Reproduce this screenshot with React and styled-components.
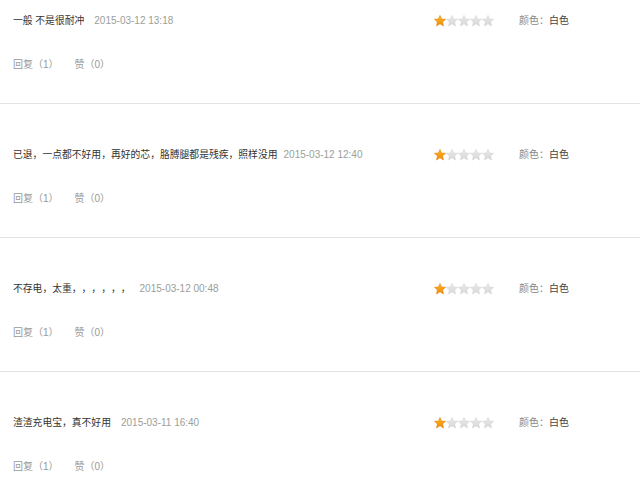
import React from "react";
import styled, { createGlobalStyle } from "styled-components";

const Global = createGlobalStyle`
  html, body { margin: 0; padding: 0; background: #fff; overflow: hidden; }
  body {
    font-family: "Liberation Sans", "Noto Sans CJK SC", sans-serif;
    text-spacing-trim: space-all;
  }
`;

const List = styled.ul`
  list-style: none;
  margin: -30px 0 0 0;
  padding: 0;
  width: 640px;
`;

const Item = styled.li`
  box-sizing: border-box;
  height: 134px;
  padding: 41px 0 0 13px;
  border-bottom: 1px solid #e3e3e3;
  display: flex;
  flex-direction: column;
  gap: 22px;
`;

const MainRow = styled.div`
  display: flex;
  align-items: center;
  height: 20px;
`;

const Content = styled.div`
  flex: 0 0 421px;
  display: flex;
  align-items: center;
  line-height: 20px;
  white-space: nowrap;
`;

const Body = styled.span`
  font-size: 9.8px;
  color: #333;
`;

const DateText = styled.span`
  margin-left: ${(p) => p.$gap}px;
  font-size: 10px;
  color: #9aa09a;
`;

const Stars = styled.div`
  display: flex;
  width: 60px;
`;

const Attr = styled.div`
  margin-left: 25px;
  font-size: 10px;
  line-height: 20px;
  color: #888;
`;

const AttrValue = styled.span`
  color: #444;
`;

const ActionRow = styled.div`
  display: flex;
  align-items: center;
  height: 20px;
  font-size: 10px;
  color: #999;
`;

const Action = styled.span`
  margin-right: ${(p) => p.$gap || 0}px;
`;

const Star = ({ on }) => (
  <svg width="12" height="12" viewBox="0 0 12 12">
    <defs>
      <linearGradient id="sg" x1="0" y1="0" x2="0" y2="1">
        <stop offset="0" stopColor="#fbb829" />
        <stop offset="1" stopColor="#f08a00" />
      </linearGradient>
      <linearGradient id="sgg" x1="0" y1="0" x2="0" y2="1">
        <stop offset="0" stopColor="#ececec" />
        <stop offset="1" stopColor="#d6d6d6" />
      </linearGradient>
    </defs>
    <path
      d="M6 0.4 L7.6 4 L11.6 4.3 L8.6 6.9 L9.5 11 L6 8.8 L2.5 11 L3.4 6.9 L0.4 4.3 L4.4 4 Z"
      fill={on ? "url(#sg)" : "url(#sgg)"}
      stroke={on ? "#e07b00" : "#cfcfcf"}
      strokeWidth="0.5"
      strokeLinejoin="round"
    />
  </svg>
);

const reviews = [
  { text: "一般 不是很耐冲", date: "2015-03-12 13:18", gap: 10 },
  { text: "已退，一点都不好用，再好的芯，胳膊腿都是残疾，照样没用", date: "2015-03-12 12:40", gap: 6 },
  { text: "不存电，太重，，，，，，", date: "2015-03-12 00:48", gap: 9 },
  { text: "渣渣充电宝，真不好用", date: "2015-03-11 16:40", gap: 10 },
];

export default function App() {
  return (
    <>
      <Global />
      <List>
        {reviews.map((r, i) => (
          <Item key={i}>
            <MainRow>
              <Content>
                <Body>{r.text}</Body>
                <DateText $gap={r.gap}>{r.date}</DateText>
              </Content>
              <Stars>
                {[0, 1, 2, 3, 4].map((s) => (
                  <Star key={s} on={s < 1} />
                ))}
              </Stars>
              <Attr>
                颜色：<AttrValue>白色</AttrValue>
              </Attr>
            </MainRow>
            <ActionRow>
              <Action $gap={16}>回复（1）</Action>
              <Action>赞（0）</Action>
            </ActionRow>
          </Item>
        ))}
      </List>
    </>
  );
}
